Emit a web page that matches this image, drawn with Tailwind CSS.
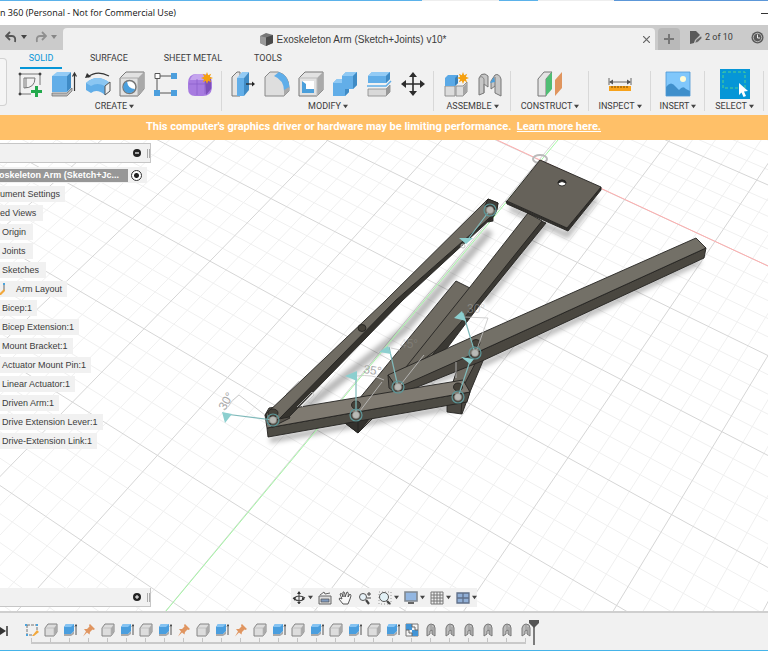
<!DOCTYPE html>
<html lang="en">
<head>
  <meta charset="UTF-8">
  <meta name="viewport" content="width=device-width, initial-scale=1.0">
  <title>Fusion 360</title>
  <script src="https://cdn.jsdelivr.net/npm/@tailwindcss/browser@4"></script>
</head>
<body class="flex h-screen flex-col overflow-hidden bg-[#f1f1f1] font-[Roboto,sans-serif] text-[#3c3c3c]">

  <!-- Icon sprites -->
  <svg class="hidden" aria-hidden="true">
    <symbol id="sketch" viewBox="0 0 26 26">
      <path d="M3 3H23V14M3 3V23H14" fill="none" stroke="#777" stroke-width="1"/>
      <path d="M7 7H18Q18 17 7 17ZM9 7v10" fill="none" stroke="#777" stroke-width="1"/>
      <path d="M2 2h2v2h-2zM22 2h2v2h-2zM2 22h2v2h-2z" fill="#444" stroke="#444" stroke-width=".6"/>
      <path d="M18 15h3v4h4v3h-4v4h-3v-4h-4v-3h4z" fill="#22a94c"/>
    </symbol>
    <symbol id="extrude" viewBox="0 0 26 26">
      <path d="M1 23V22H16L21 17V20L16 25H1Z" fill="#bbb" stroke="#777" stroke-width=".8"/>
      <path d="M1 5H16V21H1Z" fill="#62aee8"/>
      <path d="M1 5L6 1H20L16 5Z" fill="#93cbf5"/>
      <path d="M16 5L20 1V17L16 21Z" fill="#3f8bc5"/>
      <path d="M23.500 20V3M21.500 5.500L23.500 2L25.500 5.500" fill="none" stroke="#333" stroke-width="1.200"/>
    </symbol>
    <symbol id="revolve" viewBox="0 0 26 26">
      <path d="M1 12Q12 2 25 12V20L20 24Q12 17 6 22L1 19Z" fill="#62aee8"/>
      <path d="M1 12Q12 2 25 12L20 15Q12 11 6 15Z" fill="#8bc6f2"/>
      <path d="M20 15L25 11V20L20 24Z" fill="#eee" stroke="#555"/>
      <path d="M3 6Q12 -1 24 5" fill="none" stroke="#333" stroke-width="1.200"/><path d="M0 7L2 2L6 6Z" fill="#333"/>
    </symbol>
    <symbol id="hole" viewBox="0 0 26 26">
      <path d="M1 7L7 1H25V18L19 25H1Z" fill="#e2e2e2" stroke="#777"/>
      <path d="M19 7L25 1V18L19 25Z" fill="#a9a9a9"/>
      <path d="M1 7H19V25" fill="none" stroke="#aaa"/>
      <circle cx="10.500" cy="16" r="6.500" fill="#fff" stroke="#777" stroke-width="1.500"/>
      <path d="M8 10.500A6 6 0 1 0 16 18Q9 18 8 10.500Z" fill="#4a9fdd"/>
    </symbol>
    <symbol id="pattern" viewBox="0 0 26 26">
      <path d="M7 5H20M4 8V19M7 22H20" fill="none" stroke="#555"/>
      <path d="M2 2.500h5v5H2z" fill="#fff" stroke="#555"/>
      <path d="M18 2h6v6h-6zM1 19h6v6H1zM18 19h6v6h-6z" fill="#4c9fdd"/>
    </symbol>
    <symbol id="star" viewBox="0 0 12 12">
      <path d="M6 0L7.200 3.200L10.200 1.800L8.800 4.800L12 6L8.800 7.200L10.200 10.200L7.200 8.800L6 12L4.800 8.800L1.800 10.200L3.200 7.200L0 6L3.200 4.800L1.800 1.800L4.800 3.200Z" fill="#f5a00f"/>
    </symbol>
    <symbol id="form" viewBox="0 0 26 26">
      <path d="M1 12Q1 3 10 3H17Q25 4 25 12V17Q24 25 16 25H8Q1 25 1 17Z" fill="#a77be0"/>
      <path d="M3 9Q5 3 10 3H17L22 6Q18 8 16 9Z" fill="#c5a5ee"/>
      <path d="M18 9L24 8V18L19 24Z" fill="#7d50b8"/>
      <path d="M2 13H18M10 8V24M18 9V23" stroke="#8b5dc8" fill="none" stroke-width=".7"/>
      <use href="#star" x="14" y="1" width="12" height="12"/>
    </symbol>
    <symbol id="presspull" viewBox="0 0 26 26">
      <path d="M2 6L7 1H10V25H2Z" fill="#e4e4e4" stroke="#777"/>
      <path d="M7 7H14V25H7Z" fill="#62aee8"/>
      <path d="M7 7L12 1H19L14 7Z" fill="#93cbf5"/>
      <path d="M14 7L19 1V19L14 25Z" fill="#3f8bc5"/>
      <path d="M16 13H23" stroke="#222" stroke-width="1.200"/><path d="M22 10.500L25 13L22 15.500Z" fill="#222"/>
    </symbol>
    <symbol id="fillet" viewBox="0 0 26 26">
      <path d="M1 6L6 1H14Q25 4 25 17V20L20 25H1Z" fill="#dedede" stroke="#888"/>
      <path d="M10 5L15 1Q25 5 25.500 17L20 20Q20 9 10 5Z" fill="#5faeea"/>
      <path d="M20 19L25 16V20L20 25Z" fill="#aaa"/>
    </symbol>
    <symbol id="shell" viewBox="0 0 26 26">
      <path d="M1 7L7 1H25V19L19 25H1Z" fill="#e2e2e2" stroke="#777"/>
      <path d="M19 7L25 1V19L19 25Z" fill="#aaa"/>
      <path d="M1 7H19V25" fill="none" stroke="#bbb"/>
      <path d="M4 10H16V22H4Z" fill="#fff"/>
      <path d="M4 10L8 13V18H16V22H4Z" fill="#4b9fdb"/>
    </symbol>
    <symbol id="combine" viewBox="0 0 26 26">
      <path d="M1 12L5 8H10V5L14 1H25V14L21 18H17V21L13 25H1Z" fill="#62aee8"/>
      <path d="M1 12L5 8H10V12ZM10 5L14 1H25L21 5Z" fill="#8fc9f4"/>
      <path d="M21 5L25 1V14L21 18ZM13 18H17V21L13 25Z" fill="#3f8bc5"/>
    </symbol>
    <symbol id="split" viewBox="0 0 26 26">
      <path d="M2 5L6 1H24V8L20 12H2Z" fill="#62aee8"/><path d="M2 5L6 1H24L20 5Z" fill="#93cbf5"/><path d="M20 5L24 1V8L20 12Z" fill="#3f8bc5"/>
      <path d="M1 15H20L25 10" fill="none" stroke="#62aee8" stroke-width="1.500"/>
      <path d="M2 18H20L24 14V21L20 25H2Z" fill="#d9d9d9" stroke="#888" stroke-width=".8"/><path d="M20 18L24 14V21L20 25Z" fill="#999"/>
    </symbol>
    <symbol id="move" viewBox="0 0 26 26">
      <path d="M13 3V23M3 13H23" stroke="#2c2c2c" stroke-width="1.600"/>
      <path d="M13 1L17 6H9ZM13 25L9 20H17ZM1 13L6 9V17ZM25 13L20 17V9Z" fill="#2c2c2c"/>
    </symbol>
    <symbol id="component" viewBox="0 0 26 26">
      <path d="M2 15H12V25H2ZM13 15H20L24 11V21L20 25H13Z" fill="#dcdcdc" stroke="#888" stroke-width=".9"/>
      <path d="M20 16L24 12V21L20 25Z" fill="#a5a5a5"/>
      <path d="M2 7L5 4H15V12L12 15H2Z" fill="#5aa9e6"/><path d="M12 7L15 4V12L12 15Z" fill="#3780ba"/>
      <use href="#star" x="14" y="1" width="12" height="12"/>
    </symbol>
    <symbol id="joint" viewBox="0 0 26 26">
      <path d="M2 7Q4 2 8 3L11 5V16L7 13V22L2 24Z" fill="#c6c6c6" stroke="#777"/>
      <path d="M2 7Q5 4 7 8V22" fill="none" stroke="#888"/>
      <path d="M24 8Q22 2 18 4L14 10V18L18 15V22L24 25Z" fill="#c6c6c6" stroke="#777"/>
      <path d="M18 6V15" stroke="#777"/><path d="M13 12L17 6L18 11Z" fill="#4b9fdb"/>
    </symbol>
    <symbol id="plane" viewBox="0 0 26 26">
      <path d="M1 8L7 1H15L9 8V25H1Z" fill="#e4e4e4" stroke="#777"/>
      <path d="M9 8L15 1V18L9 25Z" fill="#4fbd73"/>
      <path d="M18 9L25 1V17L18 25Z" fill="#e0955e"/>
    </symbol>
    <symbol id="measure" viewBox="0 0 26 26">
      <path d="M2 7V14M24 7V14M3 11H23" stroke="#666" fill="none"/>
      <path d="M2 11L6 8.500V13.500ZM24 11L20 8.500V13.500Z" fill="#555"/>
      <path d="M2 15H24V20H2Z" fill="#f7a21b"/>
      <path d="M5 15v2M8 15v2M11 15v2M14 15v2M17 15v2M20 15v2" stroke="#7a4b00"/>
    </symbol>
    <symbol id="image" viewBox="0 0 26 26">
      <path d="M1 1H25V25H1Z" fill="#80c7fb"/>
      <path d="M1 16Q6 9 11 16L14 19Q18 14 21 18L25 20V25H1Z" fill="#3f8fcb"/>
      <circle cx="18" cy="8" r="3" fill="#fffbd5"/>
      <path d="M1 1H25V25H1Z" fill="none" stroke="#4c98d4" stroke-width=".8"/>
    </symbol>
    <symbol id="select" viewBox="0 0 30 30">
      <path d="M0 0H30V30H0Z" fill="#0696d7"/>
      <path d="M3 3H25V19H3Z" fill="none" stroke="#51d28e" stroke-dasharray="3 2"/>
      <path d="M19 14L28 22L24 22.500L26 27L23.500 28L21.500 23.500L19 26Z" fill="#fff"/>
    </symbol>

    <symbol id="t-sketch" viewBox="0 0 14 14">
      <path d="M2 2H12V8M2 2V12H8" fill="none" stroke="#666" stroke-width=".9" stroke-dasharray="3 1"/>
      <path d="M0 1h2v2H0zM11 1h2v2h-2zM1 11h2v2H1z" fill="#4ba3dc"/>
      <path d="M7 13L12 7L14 9L9 13Z" fill="#f2a83c"/>
    </symbol>
    <symbol id="t-box" viewBox="0 0 14 14">
      <path d="M1 5L4 1H13V9L10 13H1Z" fill="#ddd" stroke="#848484" stroke-linejoin="round"/>
      <path d="M10 5L13 1.500V9L10 12.500Z" fill="#aaa"/><path d="M1 5H10V13" fill="none" stroke="#b5b5b5" stroke-width=".7"/>
    </symbol>
    <symbol id="t-extrude" viewBox="0 0 14 14">
      <path d="M1 11H8L11 8V11L8 13H1Z" fill="#aaa"/><path d="M1 4L3 1H11V8L8 11H1Z" fill="#4a9ede"/><path d="M1 4L3 1H11L8 4Z" fill="#85c3f2"/>
      <path d="M13 12V2M12 3.500L13 1.500L14 3.500" stroke="#444" fill="none" stroke-width=".9"/>
    </symbol>
    <symbol id="t-pin" viewBox="0 0 14 14">
      <path d="M8 1L13 6L11.500 7L10.500 6.500L8 9L7.500 11.500L5 9.500L1 13.500L4 8.500L2 6L5 6L7.500 3.500L7 2Z" fill="#e09560"/>
    </symbol>
    <symbol id="t-pattern" viewBox="0 0 14 14">
      <path d="M1 1H13V13H1Z" fill="#f4f4f4" stroke="#777"/>
      <path d="M1 1H7V4H4V7H1ZM10 7H13V13H7V10H10Z" fill="#4194d6"/>
      <path d="M7 1V4H10V7H13M1 7H4V10H7V13" fill="none" stroke="#666"/>
      <path d="M4 4H7V7H4ZM7 7H10V10H7Z" fill="#4194d6"/>
    </symbol>
    <symbol id="t-joint" viewBox="0 0 14 14">
      <path d="M3 13V5Q4 1 7 1Q11 1 11 5V13L8 11V7L6 8V11Z" fill="#bcbcbc" stroke="#777"/><path d="M7 2V7M9 4V11" stroke="#888" stroke-width=".7"/>
    </symbol>
    <symbol id="caret" viewBox="0 0 6 6"><path d="M0 1H6L3 5Z" fill="#444"/></symbol>
  </svg>

  <!-- Strip of the window behind -->
  <div class="flex h-px shrink-0 bg-[#5bb2ea]">
    <div class="w-[55%]"></div>
    <div class="w-[10%] bg-[#eee]"></div>
    <div class="w-[5%]"></div>
    <div class="w-[10%] bg-[#eee]"></div>
    <div class="flex-1 bg-[#5c97d8]"></div>
  </div>

  <!-- Title bar -->
  <header class="flex h-6 shrink-0 items-center justify-between bg-white font-['Open_Sans',sans-serif] text-[9px] text-[#111]">
    <h1 class="whitespace-nowrap">n 360 (Personal - Not for Commercial Use)</h1>
    <button class="h-px w-[7px] bg-[#333]" aria-label="Minimize"></button>
  </header>

  <!-- Document tabs -->
  <div class="flex h-[25px] shrink-0 items-stretch bg-[#cbcbcb] pt-[3px]">
    <div class="flex w-[63px] shrink-0 items-center gap-1 pb-1 pl-[5px]">
      <button aria-label="Undo"><svg class="h-3 w-3" viewBox="0 0 12 12"><path d="M5 1L1 5L5 9M1.500 5H7Q11 5 10 11" fill="none" stroke="#555" stroke-width="1.800"/></svg></button>
      <button aria-label="Undo history"><svg class="h-[6px] w-[6px]"><use href="#caret"/></svg></button>
      <button class="ml-1 opacity-50" aria-label="Redo"><svg class="h-3 w-3" viewBox="0 0 12 12"><path d="M7 1L11 5L7 9M10.500 5H5Q1 5 2 11" fill="none" stroke="#555" stroke-width="1.800"/></svg></button>
      <button class="opacity-50" aria-label="Redo history"><svg class="h-[6px] w-[6px]"><use href="#caret"/></svg></button>
    </div>
    <div class="flex flex-1 items-center rounded-t-sm bg-[#f1f1f1] pr-[5px]">
      <div class="flex flex-1 items-center justify-center gap-1 font-['Liberation_Sans',Arial,sans-serif] text-[10px]">
        <svg class="h-[13px] w-[13px]" viewBox="0 0 13 13"><path d="M0 3L6 0L13 2V10L6 13L0 10Z" fill="#777"/><path d="M0 3L6 4.500V13L0 10Z" fill="#999"/><path d="M6 4.500L13 2V10L6 13Z" fill="#4a4a4a"/></svg>
        Exoskeleton Arm (Sketch+Joints) v10*
      </div>
      <button aria-label="Close tab"><svg class="h-[7px] w-[7px]" viewBox="0 0 7 7"><path d="M0 0L7 7M7 0L0 7" stroke="#666" stroke-width="1.200"/></svg></button>
    </div>
    <button class="ml-[3px] flex w-[22px] items-center justify-center rounded-t-sm bg-[#b9b9b9]" aria-label="New tab">
      <svg class="h-[10px] w-[10px]" viewBox="0 0 10 10"><path d="M5 0V10M0 5H10" stroke="#777" stroke-width="2"/></svg>
    </button>
    <div class="flex w-[88px] shrink-0 items-center gap-[3px] pb-[3px] pl-[9px] text-[9px]">
      <svg class="h-[13px] w-[13px]" viewBox="0 0 13 13"><path d="M1 0H7L11 4L6 9L5 12L1 13Z" fill="#5a5a5a"/><path d="M6 12L7 9L12 5L13 7L9 11Z" fill="#666" stroke="#ccc" stroke-width=".5"/></svg>
      <span class="whitespace-nowrap">2 of 10</span>
      <button class="ml-auto mr-1" aria-label="Job status"><svg class="h-[13px] w-[13px]" viewBox="0 0 13 13"><circle cx="6.500" cy="6.500" r="6" fill="#5a5a5a"/><circle cx="6.500" cy="6.500" r="4.200" fill="none" stroke="#ccc" stroke-width=".8"/><path d="M6.500 3.500V7H9" fill="none" stroke="#eee"/></svg></button>
    </div>
  </div>

  <!-- Ribbon -->
  <div class="flex h-[65px] shrink-0 overflow-hidden text-[9px]">
    <button class="mt-2 h-12 w-[7px] shrink-0 rounded-r-sm border border-l-0 border-[#d2d2d2] bg-[#f5f5f5]" aria-label="Workspace"></button>
    <div class="flex min-w-0 flex-1 flex-col">
      <nav class="flex h-[19px] shrink-0 items-stretch whitespace-nowrap pl-[13px]">
        <a href="#" class="w-[42px] border-b-2 border-[#0696d7] pt-[2px] text-center text-[#0696d7]">SOLID</a>
        <a href="#" class="ml-7 pt-[2px]">SURFACE</a>
        <a href="#" class="ml-9 pt-[2px]">SHEET METAL</a>
        <a href="#" class="ml-8 pt-[2px]">TOOLS</a>
      </nav>
      <div id="ribbon" class="flex items-stretch"></div>
    </div>
  </div>

  <!-- Performance banner -->
  <div class="flex h-[25px] shrink-0 items-center justify-center whitespace-nowrap bg-[#ffc068] pr-[21px] text-[11px] font-bold text-white">
    This computer's graphics driver or hardware may be limiting performance.&nbsp;&nbsp;<a href="#" class="underline">Learn more here.</a>
  </div>

  <!-- Canvas -->
  <main class="relative min-h-0 flex-1 overflow-hidden bg-white">
    <svg class="absolute inset-0 h-full w-full" viewBox="0 140 768 471" preserveAspectRatio="xMidYMid slice" aria-label="Exoskeleton arm model">
      <defs>
        <filter id="soft" x="-20%" y="-20%" width="140%" height="140%"><feGaussianBlur stdDeviation="2.500"/></filter>
      </defs>
      <path id="minor" fill="none" stroke="#f0f0f0" stroke-width="1"/>
      <path id="major" fill="none" stroke="#d6d6d6" stroke-width="1"/>

      <!-- Ground shadows -->
      <g filter="url(#soft)" fill="none" stroke="#000" stroke-opacity=".28" stroke-width="6">
        <path d="M490 231L404 330L304 409" stroke-width="8"/>
        <path d="M270 440L464 405"/>
        <path d="M700 261L487 362L418 387"/>
        <path d="M510 208L567 235L596 198M544 228L485 302"/>
      </g>

      <!-- Axes and origin -->
      <path d="M497 140L768 266" stroke="#ffadad"/>
      <path d="M558 140L166 611" stroke="#a5f7a5"/>
      <ellipse cx="540" cy="159" rx="7" ry="4" fill="none" stroke="#bbb" stroke-width="2"/>

      <g stroke="#252421" stroke-width=".9" stroke-linejoin="round">
        <!-- Linear actuator -->
        <path d="M456 281L470 288L440 352L370 421L358 433L345 423L345 416Z" fill="#6f6b62"/>
        <path d="M345 423L358 417L370 418L358 433Z" fill="#34322e"/>
        <path d="M358 418V433"/>
        <!-- Bicep and mount bracket -->
        <path d="M541 221L546 223L482 302L448 347L425 366L436 350Z" fill="#3b3934"/>
        <path d="M528 213L542 221L461 322L436 350L396 380L410 362L470 287Z" fill="#69655c"/>
        <path d="M506 201L567 228L601 187V190L568 231L507 204Z" fill="#33312d"/>
        <path d="M540 160L601 187L567 228L507 201Z" fill="#66625a"/>
        <ellipse cx="562" cy="183" rx="4" ry="3" fill="#fff"/>
        <path d="M558 183Q558 180 562 180Q566 180 566 183Q562 180 558 183Z" fill="#222"/>
        <!-- Drive extension link -->
        <path d="M458 367L473 356L485 356L470 392L462 414L447 412L447 405Z" fill="#4b4842"/>
        <path d="M458 367L473 356L478 358L464 385H452Z" fill="#716d64"/>
        <path d="M461 414L462 399" fill="none"/>
        <!-- Driven arm -->
        <path d="M706 248L704 258L482 361L410 390L396 393L397 387L480 351Z" fill="#4a4740"/>
        <path d="M696 238L706 248L480 351L397 388L388 375L477 335Z" fill="#737067"/>
        <path d="M388 375L397 388L396 393L389 388Z" fill="#58554d"/>
        <!-- Drive extension lever -->
        <path d="M267 428L470 392L467 402L268 437Z" fill="#4d4b44"/>
        <path d="M265 415L294 408L463 380L470 392L267 428Z" fill="#7f7a71"/>
        <path d="M265 415L269 408L283 406L290 418L272 427Z" fill="#56524b"/>
        <!-- Bicep extension -->
        <path d="M486 213L493 213V221L488 222L486 219Z" fill="#34322e"/>
        <path d="M496 212L494 216L403 300L289 417L279 419L396 300Z" fill="#35332e"/>
        <path d="M488 199L498 203L496 212L396 300L279 419L268 424L266 414L384 302Z" fill="#706c63"/>
        <path d="M488 199L498 203L497 210L485 206Z" fill="#403d38"/>
        <!-- Pin holes -->
        <g fill="#454139">
          <ellipse cx="362" cy="328" rx="4" ry="3.500"/>
          <ellipse cx="273" cy="413" rx="5" ry="4"/>
          <ellipse cx="356" cy="405" rx="4.500" ry="4"/>
          <ellipse cx="458" cy="387" rx="4.500" ry="4"/>
          <ellipse cx="476" cy="343" rx="4" ry="3.500"/>
        </g>
      </g>

      <!-- Sketch lines and angle dimensions -->
      <g fill="none" stroke="#c4c4c4" stroke-width=".8">
        <path d="M265 415L239 395Q231 400 228 407M357 376Q372 374 384 380M382 382L360 411"/>
        <path d="M424 355L398 388M391 348L400 350M465 317L488 318L476 352M456 362V378"/>
        <path d="M286 394L299 381M297 407L312 392L314 395L302 407"/>
      </g>
      <g class="font-['Liberation_Sans',sans-serif] text-[12px]" fill="#a8a8a8">
        <text x="225" y="411" transform="rotate(-60 225 411)">30°</text>
        <text x="363" y="373" transform="rotate(8 363 373)">35°</text>
        <text x="467" y="313" fill-opacity=".5">30°</text>
        <text x="400" y="348" fill-opacity=".3">45°</text>
      </g>
      <circle cx="463" cy="246" r="2" fill="none" stroke="#c4c4c4"/>

      <!-- Joint markers -->
      <g stroke="#7fb9ba" stroke-width="1.200" fill="#8ccfcf">
        <path d="M273 420L225 414M356 415V373M398 387L389 347M475 353L463 313M458 397L470 361M490 210L466 242" fill="none"/>
        <path stroke="none" d="M222 412L232 414L225 423ZM345 376L357 371V381ZM379 352L388 346L391 354ZM454 318L462 311L466 321ZM461 357L474 359L470 364ZM459 238L473 238L466 244Z"/>
      </g>
      <g fill="#b9b9b5" stroke="#8f8f8a" stroke-width=".6">
        <circle cx="273" cy="420" r="3.500"/><circle cx="356" cy="415" r="3.500"/><circle cx="398" cy="387" r="3.500"/>
        <circle cx="458" cy="397" r="3.500"/><circle cx="475" cy="353" r="3.500"/><circle cx="490" cy="210" r="3.500"/>
      </g>
      <g fill="none" stroke="#5d9698" stroke-width="1.200">
        <circle cx="273" cy="420" r="6"/><circle cx="356" cy="415" r="6"/><circle cx="398" cy="387" r="6"/>
        <circle cx="458" cy="397" r="6"/><circle cx="475" cy="353" r="6"/><circle cx="490" cy="210" r="6"/>
      </g>
    </svg>

    <!-- Browser panel -->
    <aside class="absolute left-0 top-[3px] font-['Liberation_Sans',Arial,sans-serif] text-[9px]">
      <div class="flex h-5 w-[151px] items-center justify-end gap-[6px] border border-l-0 border-[#c6c6c6] bg-[#f1f1f1]">
        <button aria-label="Collapse browser"><svg class="h-2 w-2" viewBox="0 0 8 8"><circle cx="4" cy="4" r="4" fill="#222"/><path d="M2 4H6" stroke="#fff" stroke-width="1.200"/></svg></button>
        <span class="h-[9px] w-[3px] border-x border-[#aaa]"></span>
      </div>
      <ul class="mt-1 flex flex-col items-start gap-[3px] whitespace-nowrap leading-4">
        <li class="flex h-4 w-[147px] items-center bg-[#f1f1f1]">
          <span class="flex h-[13px] w-[128px] items-center justify-end bg-[#979797] pr-[9px] font-bold text-white">oskeleton Arm (Sketch+Jc...</span>
          <input type="radio" checked aria-label="Activate component" class="ml-[3px] h-[11px] w-[11px] appearance-none rounded-full border border-[#333] bg-[radial-gradient(#222_2px,#fff_3px)]">
        </li>
        <li class="bg-[#f1f1f1] pr-[5px]">ument Settings</li>
        <li class="bg-[#f1f1f1] pr-[7px]">ed Views</li>
        <li class="bg-[#f1f1f1] pl-[2px] pr-[7px]">Origin</li>
        <li class="bg-[#f1f1f1] pl-[2px] pr-[7px]">Joints</li>
        <li class="bg-[#f1f1f1] pl-[2px] pr-[7px]">Sketches</li>
        <li class="flex items-center gap-[11px] bg-[#f1f1f1] pr-[5px]">
          <svg class="h-3 w-[5px]" viewBox="0 0 5 12"><path d="M4 1V8" stroke="#666"/><path d="M3 0h2v2H3z" fill="#4ba3dc"/><path d="M0 10L4 6L5 8L1 12H0Z" fill="#f2a83c"/></svg>Arm Layout
        </li>
        <li class="bg-[#f1f1f1] pl-[2px] pr-[5px]">Bicep:1</li>
        <li class="bg-[#f1f1f1] pl-[2px] pr-[5px]">Bicep Extension:1</li>
        <li class="bg-[#f1f1f1] pl-[2px] pr-[5px]">Mount Bracket:1</li>
        <li class="bg-[#f1f1f1] pl-[2px] pr-[5px]">Actuator Mount Pin:1</li>
        <li class="bg-[#f1f1f1] pl-[2px] pr-[5px]">Linear Actuator:1</li>
        <li class="bg-[#f1f1f1] pl-[2px] pr-[5px]">Driven Arm:1</li>
        <li class="bg-[#f1f1f1] pl-[2px] pr-[5px]">Drive Extension Lever:1</li>
        <li class="bg-[#f1f1f1] pl-[2px] pr-[5px]">Drive-Extension Link:1</li>
      </ul>
    </aside>

    <!-- Comments panel -->
    <div class="absolute bottom-1 left-0 flex h-[19px] w-[151px] items-center justify-end gap-[6px] border-b border-r border-[#c6c6c6] bg-[#f1f1f1]">
      <button aria-label="Expand comments"><svg class="h-2 w-2" viewBox="0 0 8 8"><circle cx="4" cy="4" r="4" fill="#222"/><path d="M2 4H6M4 2V6" stroke="#fff"/></svg></button>
      <span class="h-[9px] w-[3px] border-x border-[#aaa]"></span>
    </div>

    <!-- Navigation bar -->
    <div class="absolute bottom-1 left-1/2 flex h-[19px] w-[186px] -translate-x-1/2 items-center gap-1 bg-[#f1f1f1]">
      <button class="flex items-center gap-px" aria-label="Orbit"><svg class="h-4 w-4" viewBox="0 0 16 16"><path d="M8 2V14M3 8Q8 4 14 8M2 8Q8 13 13 9" fill="none" stroke="#444" stroke-width="1.100"/><path d="M8 1L10 4H6ZM8 14L6 12H10ZM2 8L5 7L4 11ZM11 7L14 9L11 10Z" fill="#333"/></svg><svg class="h-[5px] w-[5px]"><use href="#caret"/></svg></button>
      <button aria-label="Look at"><svg class="h-4 w-4" viewBox="0 0 16 16"><path d="M2 6H14V14H2Z" fill="#ddd" stroke="#666"/><path d="M4 9H12V12H4Z" fill="#7e99bd" stroke="#555" stroke-width=".7"/><path d="M3 5L7 2L8 4L13 3" fill="none" stroke="#666"/></svg></button>
      <button aria-label="Pan"><svg class="h-4 w-4" viewBox="0 0 16 16"><path d="M6 14L2 9Q2 7 5 9L3 4Q5 2 6 7L6 2Q8 1 8 7L10 2Q12 2 11 7L13 4Q15 5 13 9L11 14Z" fill="#f8f8f8" stroke="#444" stroke-width=".9"/></svg></button>
      <button aria-label="Zoom"><svg class="h-4 w-4" viewBox="0 0 16 16"><circle cx="6" cy="7" r="3.500" fill="#e7f2f8" stroke="#555"/><path d="M9 10L12 14" stroke="#444" stroke-width="2.200"/><path d="M10 4H14M12 2V6M10 8H14" stroke="#444"/></svg></button>
      <button class="flex items-center gap-px" aria-label="Fit"><svg class="h-4 w-4" viewBox="0 0 16 16"><path d="M2 2H14V14H2Z" fill="none" stroke="#999" stroke-dasharray="1 2"/><circle cx="7" cy="7" r="4.500" fill="#e2f1f6" stroke="#555"/><path d="M10 11L13 14" stroke="#444" stroke-width="2.200"/></svg><svg class="h-[5px] w-[5px]"><use href="#caret"/></svg></button>
      <button class="flex items-center gap-px" aria-label="Display settings"><svg class="h-4 w-4" viewBox="0 0 16 16"><path d="M2 2H14V11H2Z" fill="#93b7e2" stroke="#808890" stroke-width="1.600"/><path d="M5 13H11" stroke="#666" stroke-width="2"/></svg><svg class="h-[5px] w-[5px]"><use href="#caret"/></svg></button>
      <button class="flex items-center gap-px" aria-label="Grid"><svg class="h-4 w-4" viewBox="0 0 16 16"><path d="M2 2H14V14H2ZM5 2V14M8 2V14M11 2V14M2 5H14M2 8H14M2 11H14" fill="#eee" stroke="#777" stroke-width="1"/></svg><svg class="h-[5px] w-[5px]"><use href="#caret"/></svg></button>
      <button class="flex items-center gap-px" aria-label="Viewports"><svg class="h-4 w-4" viewBox="0 0 16 16"><path d="M2 3H14V13H2ZM8 3V13M2 8H14" fill="#91afd6" stroke="#5f6f88" stroke-width="1.300"/></svg><svg class="h-[5px] w-[5px]"><use href="#caret"/></svg></button>
    </div>
  </main>

  <!-- Timeline -->
  <footer class="flex h-10 shrink-0 items-start border-b border-t-2 border-b-[#45b4e9] border-t-[#cfcfcf] bg-[#f1f1f1]">
    <button class="mt-[13px] w-[22px] shrink-0" aria-label="Go to end"><svg class="h-[10px] w-2" viewBox="0 0 8 10"><path d="M0 1L6 5L0 9Z" fill="#333"/><path d="M7 0V10" stroke="#333" stroke-width="1.500"/></svg></button>
    <div id="timeline" class="flex pt-[10px]"></div>
    <svg class="-ml-[6px] mt-[6px] h-[26px] w-[10px] shrink-0" viewBox="0 0 10 26"><path d="M0 1H10V4L5 9L0 4Z" fill="#555"/><path d="M5 7V26" stroke="#555" stroke-width="1.500"/></svg>
  </footer>

  <script>
    const groups = [
      ['CREATE', 'w-[215px]', ['sketch', 'extrude', 'revolve', 'hole', 'pattern', 'form']],
      ['MODIFY', 'w-[212px]', ['presspull', 'fillet', 'shell', 'combine', 'split', 'move']],
      ['ASSEMBLE', 'w-[77px]', ['component', 'joint']],
      ['CONSTRUCT', 'w-[78px]', ['plane']],
      ['INSPECT', 'w-[62px]', ['measure']],
      ['INSERT', 'w-[54px]', ['image']],
      ['SELECT', 'w-[59px]', ['select']],
    ];
    document.getElementById('ribbon').innerHTML = groups.map(([label, width, icons]) => `
      <div class="${width} relative flex shrink-0 flex-col items-center">
        <div class="flex h-[30px] items-center gap-2">
          ${icons.map(id => `<button aria-label="${id}"><svg class="${id === 'select' ? 'h-[30px] w-[30px]' : 'h-[26px] w-[26px]'}"><use href="#${id}"/></svg></button>`).join('')}
        </div>
        <button class="mt-[2px] flex items-center gap-[2px] leading-[11px]">${label}<svg class="h-[5px] w-[5px]"><use href="#caret"/></svg></button>
        <span class="absolute right-0 top-[2px] h-10 w-px bg-[#d8d8d8]"></span>
      </div>`).join('');

    const features = ['sketch', 'box', 'extrude', 'pin', 'box', 'extrude', 'box', 'extrude', 'pin', 'box', 'extrude', 'pin',
      'box', 'extrude', 'box', 'extrude', 'box', 'extrude', 'box', 'extrude', 'pattern', 'joint', 'joint', 'joint', 'joint', 'joint', 'joint'];
    document.getElementById('timeline').innerHTML = features.map((id, i) => `
      <div class="flex w-[19px] flex-col items-center">
        <button aria-label="${id}"><svg class="h-[14px] w-[14px]"><use href="#t-${id}"/></svg></button>
        <span class="mt-px h-1 w-px bg-[#c4c4c4]"></span>
        <span class="${i === 0 ? 'w-[10px] self-end' : i === features.length - 1 ? 'w-[10px] self-start' : 'w-full'} h-[2px] bg-[#c9c9c9]"></span>
      </div>`).join('');

    // Ground grid: plane coordinates to view coordinates
    function project(i, j) {
      const w = 1 - 0.0257 * i - 0.0367 * j;
      return `${((69.65 * i - 67.35 * j + 539) / w).toFixed(1)} ${((34.5 * i + 51.6 * j + 160) / w).toFixed(1)}`;
    }
    let minor = '', major = '';
    for (let n = -60; n <= 60; n++) {
      const k = n / 5;
      let d = '';
      if (k <= 10) d += `M${project(k, -6)}L${project(k, 14)}`;
      if (k >= -6) d += `M${project(-12, k)}L${project(10, k)}`;
      if (n % 5 === 0) major += d; else minor += d;
    }
    document.getElementById('minor').setAttribute('d', minor);
    document.getElementById('major').setAttribute('d', major);
  </script>
</body>
</html>
